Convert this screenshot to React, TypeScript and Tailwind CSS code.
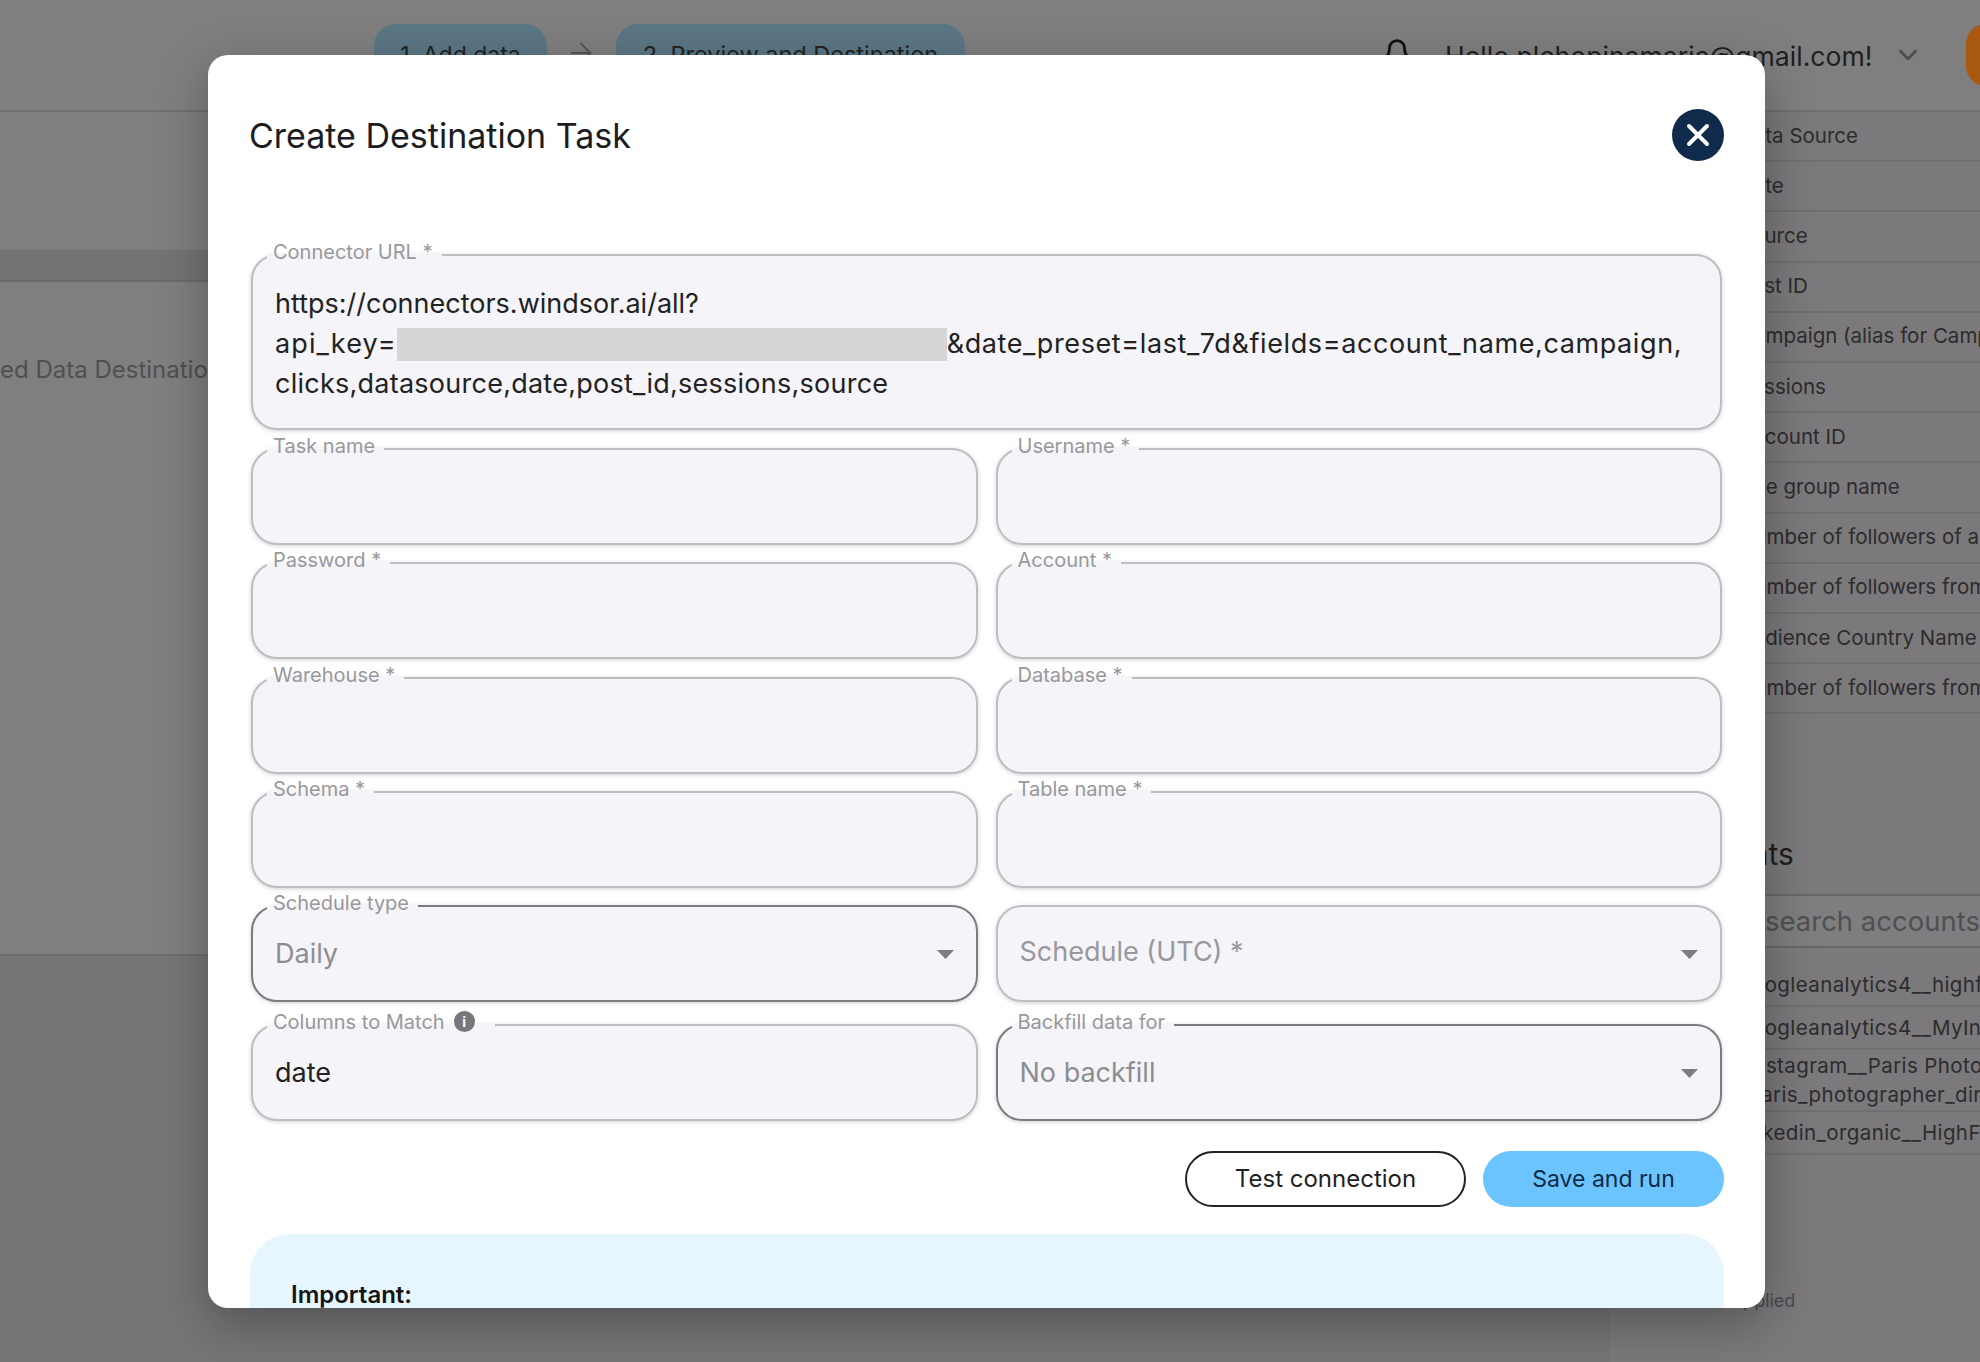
import { ArrowRight, Bell, ChevronDown, X } from "lucide-react"
import type { ReactNode } from "react"

const COLUMN_ROWS = [
  "Data Source",
  "Date",
  "Source",
  "Post ID",
  "Campaign (alias for Campaign name)",
  "Sessions",
  "Account ID",
  "Age group name",
  "Number of followers of a account",
  "Number of followers from country",
  "Audience Country Name",
  "Number of followers from city",
]

const ACCOUNT_ROWS = [
  { id: "ga-high", lines: ["googleanalytics4__highfive"], cls: "h-[43px] pl-[129px]" },
  { id: "ga-my", lines: ["googleanalytics4__MyInsights"], cls: "h-[43px] pl-[129px]" },
  { id: "ig", lines: ["instagram__Paris Photographer", "paris_photographer_direct"], cls: "h-[62px] pl-[138px]" },
  { id: "li", lines: ["linkedin_organic__HighFive"], cls: "h-[43px] pl-[129px]" },
]

function Caret() {
  return (
    <svg width="17" height="9" viewBox="0 0 17 9" className="shrink-0">
      <path d="M0 0h17L8.5 9z" fill="#7d7d80" />
    </svg>
  )
}

interface FieldProps {
  label?: string
  dark?: boolean
  info?: boolean
  children?: ReactNode
}

function Field({ label, dark, info, children }: FieldProps) {
  return (
    <fieldset
      className={`h-[112px] min-w-0 rounded-[26px] border-2 bg-[#f4f4f9] px-[22px] shadow-[0_1px_4px_rgba(0,0,0,0.18)] ${
        dark ? "border-[#7c7c80]" : "border-[#bdbdc2]"
      }`}
    >
      {label ? (
        <legend className="-ml-[8px] flex h-[32px] items-start pl-[6px] pr-[9px] text-[20px] leading-[26px] text-[#98989d]">
          {label}
          {info && (
            <span className="relative top-[2px] ml-[9px] mr-[11px] flex h-[21px] w-[21px] items-center justify-center rounded-full bg-[#77777b] text-[14px] font-bold leading-none text-white">
              i
            </span>
          )}
        </legend>
      ) : (
        <legend className="h-[32px] w-0" />
      )}
      <div className="flex h-[65px] items-center justify-between text-[27px]">{children}</div>
    </fieldset>
  )
}

function Background() {
  return (
    <div className="flex h-[1362px] w-[1980px] flex-col overflow-hidden bg-[#7f7f7f]">
      <header className="flex h-[112px] shrink-0 items-start border-b-2 border-[#707070] pt-[24px]">
        <div className="ml-[374px] flex h-[62px] w-[173px] shrink-0 items-center justify-center rounded-[22px] bg-[#5b7684] text-[23px] text-[#222]">
          1. Add data
        </div>
        <ArrowRight className="ml-[18px] mt-[13px] h-[32px] w-[32px] shrink-0 text-[#555]" strokeWidth={1.5} />
        <div className="ml-[19px] flex h-[62px] w-[349px] shrink-0 items-center justify-center whitespace-nowrap rounded-[22px] bg-[#5b7684] text-[23.5px] text-[#222]">
          2. Preview and Destination
        </div>
        <Bell className="ml-[417px] mt-[14px] h-[30px] w-[30px] shrink-0 text-[#111]" strokeWidth={2.2} />
        <div className="ml-[33px] mt-[14px] w-[430px] shrink-0 whitespace-nowrap text-[26.6px] leading-[36px] text-[#1f1f1f]">
          Hello plchopinamaria@gmail.com!
        </div>
        <ChevronDown className="ml-[18px] mt-[16px] h-[30px] w-[30px] shrink-0 text-[#4e4e4e]" strokeWidth={2.4} />
        <div className="ml-[43px] h-[62px] w-[60px] shrink-0 rounded-[20px] bg-[#a9590f]" />
      </header>

      <div className="flex min-h-0 flex-1">
        <div className="flex w-[1610px] shrink-0 flex-col">
          <div className="h-[138px] shrink-0" />
          <div className="h-[32px] shrink-0 border-b-2 border-[#6a6a6a] bg-[#737373]" />
          <div className="h-[672px] shrink-0 overflow-hidden pt-[73px] text-[24px] leading-[30px] text-[#505050]">
            ed Data Destinations
          </div>
          <div className="flex-1 border-t-2 border-[#6e6e6e] bg-[#767677]" />
        </div>

        <aside className="flex w-[370px] shrink-0 flex-col overflow-hidden bg-[#7b797c] text-[20.5px] text-[#2c2c2c]">
          {COLUMN_ROWS.map((row) => (
            <div
              key={row}
              className="flex h-[50.2px] shrink-0 items-center whitespace-nowrap border-b-2 border-[#6f6f70] pl-[129px]"
            >
              {row}
            </div>
          ))}
          <h2 className="mt-[120px] h-[60px] shrink-0 whitespace-nowrap pl-[50px] text-[30px] leading-[40px] text-[#1f1f1f]">
            Accounts
          </h2>
          <div className="flex h-[54px] shrink-0 items-center whitespace-nowrap border-y-2 border-[#686868] bg-[#7e7e80] pl-[155px] text-[27.5px] text-[#505050]">
            search accounts
          </div>
          <div className="h-[16px] shrink-0" />
          {ACCOUNT_ROWS.map((row) => (
            <div
              key={row.id}
              className={`flex shrink-0 flex-col justify-center whitespace-nowrap border-b-2 border-[#6f6f70] leading-[29px] tracking-[0.4px] ${row.cls}`}
            >
              {row.lines.map((line) => (
                <div key={line}>{line}</div>
              ))}
            </div>
          ))}
          <div className="mt-[132px] whitespace-nowrap pl-[123px] text-[18px] text-[#4a4a4c]">applied</div>
        </aside>
      </div>
    </div>
  )
}

function Modal() {
  return (
    <div className="absolute left-[208px] top-[55px] h-[1253px] w-[1557px] overflow-hidden rounded-[20px] bg-white pl-[42px] pr-[41px] shadow-[0_16px_50px_rgba(0,0,0,0.3)]">
      <div className="flex h-[160px] items-center justify-between">
        <h1 className="-ml-px text-[34px] font-normal text-[#1c1c1e]">Create Destination Task</h1>
        <button className="flex h-[52px] w-[52px] items-center justify-center rounded-full bg-[#0f2a4a] text-white">
          <X className="h-[36px] w-[36px]" strokeWidth={2.6} />
        </button>
      </div>

      <div className="ml-[1px] mr-[2px] mt-[24px]">
        <fieldset className="h-[191px] min-w-0 rounded-[26px] border-2 border-[#bdbdc2] bg-[#f4f4f9] px-[22px] shadow-[0_1px_4px_rgba(0,0,0,0.18)]">
          <legend className="-ml-[8px] h-[32px] pl-[6px] pr-[9px] text-[20px] leading-[26px] text-[#98989d]">
            Connector URL *
          </legend>
          <div className="whitespace-nowrap pt-[13px] text-[27px] leading-[40px] text-[#222]">
            <div>https://connectors.windsor.ai/all?</div>
            <div className="flex items-center">
              <span className="tracking-[1.1px]">api_key=</span>
              <span className="h-[33px] w-[550px] shrink-0 bg-[#d6d6d8]" />
              <span className="tracking-[0.6px]">&amp;date_preset=last_7d&amp;fields=account_name,campaign,</span>
            </div>
            <div className="tracking-[0.25px]">clicks,datasource,date,post_id,sessions,source</div>
          </div>
        </fieldset>

        <div className="mt-[3px] grid grid-cols-2 gap-x-[18px] gap-y-[2.3px]">
          <Field label="Task name" />
          <Field label="Username *" />
          <Field label="Password *" />
          <Field label="Account *" />
          <Field label="Warehouse *" />
          <Field label="Database *" />
          <Field label="Schema *" />
          <Field label="Table name *" />
          <Field label="Schedule type" dark>
            <span className="text-[#8d8d91]">Daily</span>
            <Caret />
          </Field>
          <Field>
            <span className="-mt-[4px] text-[#98989d]">Schedule (UTC) *</span>
            <Caret />
          </Field>
        </div>

        <div className="mt-[7px] grid grid-cols-2 gap-x-[18px]">
          <Field label="Columns to Match" info>
            <span className="text-[#222]">date</span>
          </Field>
          <Field label="Backfill data for" dark>
            <span className="text-[#8d8d91]">No backfill</span>
            <Caret />
          </Field>
        </div>
      </div>

      <div className="mt-[30px] flex justify-end gap-[17px] text-[24px]">
        <button className="h-[56px] w-[281px] rounded-full border-2 border-[#232323] text-[#1f1f1f]">Test connection</button>
        <button className="h-[56px] w-[241px] rounded-full bg-[#6cc4ff] text-[23px] text-[#0e2a48]">Save and run</button>
      </div>

      <div className="mt-[27px] h-[200px] rounded-t-[40px] bg-[#e6f5fe] pl-[41px] pt-[45px] text-[24px] font-semibold leading-[32px] text-[#141414]">
        Important:
      </div>
    </div>
  )
}

export default function App() {
  return (
    <div className="relative h-[1362px] w-[1980px] overflow-hidden font-['Inter',sans-serif]">
      <Background />
      <Modal />
    </div>
  )
}
